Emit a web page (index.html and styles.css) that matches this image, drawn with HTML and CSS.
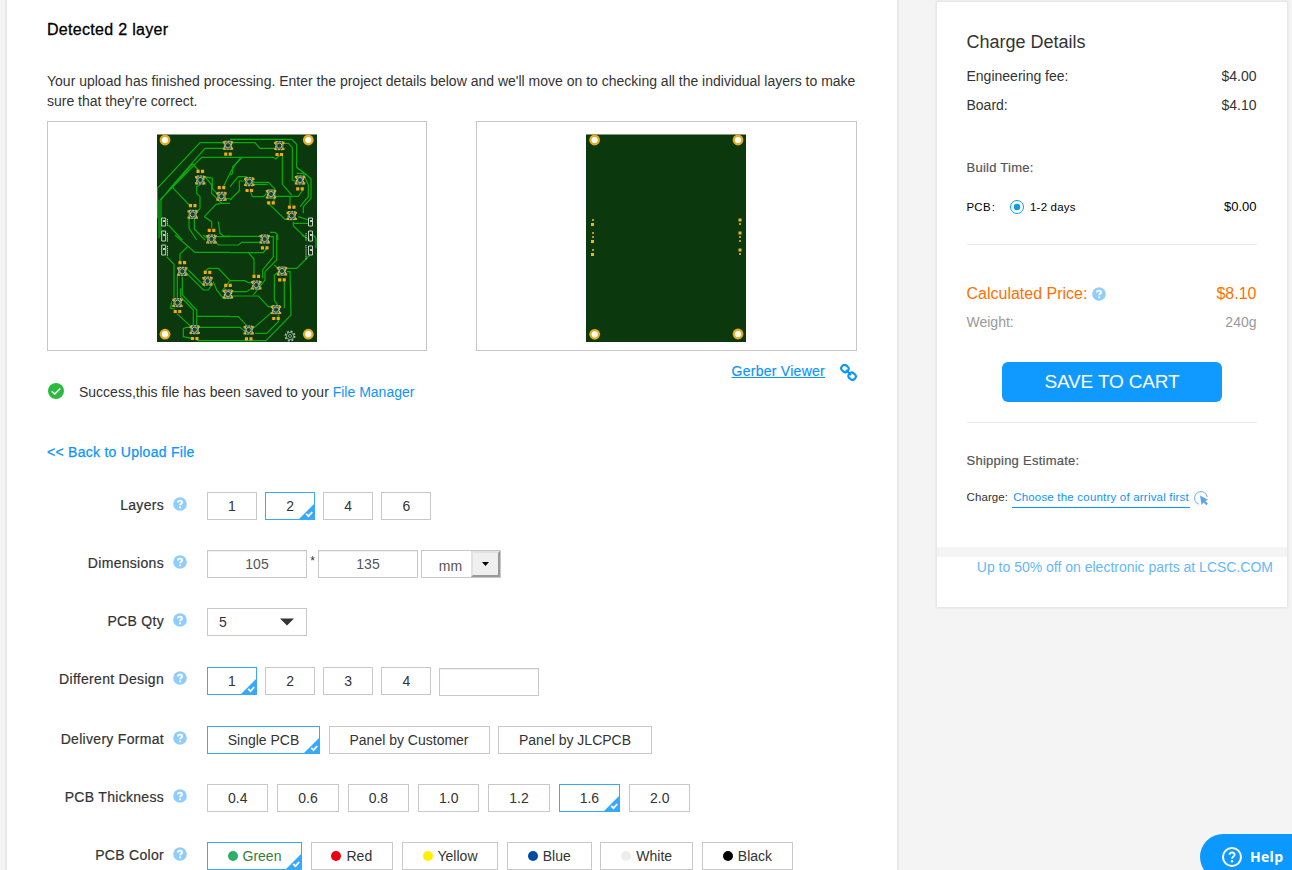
FILE: index.html
```html
<!DOCTYPE html>
<html lang="en">
<head>
<meta charset="utf-8">
<title>PCB Order</title>
<link rel="stylesheet" href="styles.css">
</head>
<body>
<svg class="defs" aria-hidden="true">
  <defs>
    <symbol id="help" viewBox="0 0 14 14"><circle cx="7" cy="7" r="6.8" fill="#90cdff"/><path d="M4.9 5.4C4.9 3 9.1 3 9.1 5.3C9.1 6.8 7.2 6.7 7.1 8.2M7.1 9.5V11.3" fill="none" stroke="#fff" stroke-width="1.9"/></symbol>
    <symbol id="corner" viewBox="0 0 17 17"><path d="M17 0V17H0z" fill="#36a9fc"/><path d="M8.2 10.9L10.5 13.2L14.2 9" fill="none" stroke="#fff" stroke-width="1.8"/></symbol>
    <g id="hole"><circle r="5.4" fill="#e9ac1c"/><circle r="3.1" fill="#fff"/></g>
    <g id="chip"><rect x="-3.6" y="-4" width="7.2" height="8" fill="#31542f" stroke="#b4c6b1" stroke-width="1" stroke-dasharray="2.4 .6"/><circle r="2.6" fill="#1d431c" stroke="#b4c6b1" stroke-width=".9"/><path d="M-5.2-4h2.5v2.2h-2.500zM2.700-4h2.500v2.200H2.700zM-5.200 2.200h2.500v2.200h-2.500zM2.700 2.200h2.500v2.200H2.700z" fill="#d6ab2c"/></g>
    <path id="pads" d="M-3.8-1.6h3.1v3.2h-3.1zM.7-1.6h3.1v3.2H.7z" fill="#f0ab13"/>
    <g id="led-down"><use href="#chip"/><use href="#pads" y="8.8"/></g>
    <g id="led-up"><use href="#chip"/><use href="#pads" y="-8.6"/></g>
  </defs>
</svg>

<div class="page">
  <main class="order">
    <h1 class="order-title">Detected 2 layer</h1>
    <p class="intro">Your upload has finished processing. Enter the project details below and we'll move on to checking all the individual layers to make sure that they're correct.</p>

    <div class="previews">
      <div class="preview preview-top">
        <svg class="board" viewBox="157 134 160 208">
          <rect x="157" y="134" width="160" height="208" fill="#0b390d"/>
          <path d="M157 134.5H317" stroke="#7d9a7d"/>
          <g class="traces">
            <path transform="translate(150 125) scale(.33333)" d="M22 280V190L150 53H240M33 225L60 190L165 70H220M30 225L155 97H240M33 330V225M27 340V225M145 135L127 117L70 182V190L118 240M165 155L185 180V205L215 235H240M270 100L245 135L220 185M150 180L140 185V205L150 215V250L140 262M163 275L198 238L215 235M163 275L185 290V310M117 280V310L140 345M133 280V312L165 345M205 290L210 325L220 333H240M55 300L97 345M163 155L187 160V190L205 210M225 220L245 222"/>
            <path transform="translate(230 125) scale(.33333)" d="M0 43H185L200 58V127L230 150L243 162V220L220 245V265M0 53H75L90 70H135M160 55H175L187 68V165L200 170M0 97H130L137 102L150 90M157 90V178L185 210M0 150L8 145V125L37 97M0 185L25 155H50M28 195V168H50M70 172H115L135 192V215L130 232M70 178H113M135 214H205L218 195M180 240V212M60 195L67 215H100L110 205M110 230L165 283H180M190 290V303L230 340M190 295H235M200 145H220L235 180V215L210 245M205 275L235 285M0 225L30 195M0 334H95M120 322H135L143 330V345"/>
            <path transform="translate(150 235) scale(.33333)" d="M90 80V57L113 35M75 0L135 52H240M160 0L175 12M195 20L205 30H240M200 5H240M50 65L72 88V190M82 120V190M97 125V180L140 225V270M92 160V185L130 225V270M105 110L160 165H175L185 150M163 110L175 100H205L240 137L215 170M190 140L200 165L220 190H240M65 200L62 220L75 222M80 235L120 272M140 244H240M150 277H240M125 310L100 305V280L110 277H120M115 105L165 155M140 317H240"/>
            <path transform="translate(230 235) scale(.33333)" d="M0 30H25L35 22H90M55 53L72 72V120M0 53H100L110 40M120 5H130V65L98 105V130M140 0V75L105 110V135L70 180M133 90L150 105M170 100H200L240 60M170 110H180L183 240L108 317H0M163 140V220M145 215L133 195V120L145 112M0 183H85L115 215H130M0 137H45L55 143H70M0 170H50L65 160M0 245H25L50 272M70 280L125 232M75 295H110L145 260V240M0 277H30L45 290M215 0L240 15M250 0L258 10V40"/>
          </g>
          <g class="connectors">
            <path d="M161.700 218h4v8h-4zM161.700 231h4v10h-4zM161.700 245h4v10h-4zM308.500 218h4v8h-4zM308.500 231h4v10h-4zM308.500 246h4v9h-4z"/>
            <path d="M167.500 219v7M167.500 233v9M167.500 246v10M306 233v8M306 245v15" stroke-dasharray="1.300 .8"/>
            <path d="M163 221h2M163 235h2M163 249h2M310 221h2M310 235h2M310 250h2" stroke="#fff" stroke-width="1.500"/>
          </g>
          <use href="#led-down" x="228" y="145.300"/><use href="#led-down" x="279.300" y="145.700"/>
          <use href="#led-up" x="200.300" y="180"/><use href="#led-up" x="221.500" y="196.300"/>
          <use href="#led-up" x="192.700" y="214.300"/><use href="#led-up" x="211.500" y="239"/>
          <use href="#led-down" x="249.300" y="181.700"/><use href="#led-down" x="271" y="194"/>
          <use href="#led-down" x="300" y="180"/><use href="#led-up" x="291.700" y="215.700"/>
          <use href="#led-down" x="264.700" y="239"/><use href="#led-up" x="182.300" y="271.300"/>
          <use href="#led-up" x="207.500" y="281"/><use href="#led-up" x="228" y="294"/>
          <use href="#led-down" x="177.500" y="302.700"/><use href="#led-down" x="194.700" y="329.700"/>
          <use href="#led-up" x="256.300" y="285"/><use href="#led-down" x="282" y="271"/>
          <use href="#led-down" x="276" y="309.700"/><use href="#led-down" x="248.700" y="330"/>
          <use href="#hole" x="165" y="140"/><use href="#hole" x="308.300" y="140"/>
          <use href="#hole" x="165" y="334.200"/><use href="#hole" x="308.300" y="334.200"/>
          <g fill="none" stroke="#a4b8a4"><circle cx="290" cy="336" r="4.700" stroke-width="1.500" stroke-dasharray="2 1.690"/><circle cx="290" cy="336" r="3.600" stroke-width=".8"/><circle cx="290" cy="336" r="1.500" stroke-width=".8"/></g>
        </svg>
      </div>
      <div class="preview preview-bottom">
        <svg class="board" viewBox="586 134 160 208">
          <rect x="586" y="134" width="160" height="208" fill="#0b390d"/>
          <path d="M586 134.500H746" stroke="#7d9a7d"/>
          <use href="#hole" x="594.600" y="140"/><use href="#hole" x="738" y="140"/>
          <use href="#hole" x="594.700" y="334.300"/><use href="#hole" x="738" y="334"/>
          <path fill="#edb421" d="M591 223h3v3h-3zM591 240h3v3h-3zM591 253h3v3h-3zM738.500 218.500h3v3h-3zM738.500 231.500h3v3h-3zM738.500 248.500h3v3h-3z"/>
          <path fill="#b9972a" d="M592 219h2v2h-2zM592 232h2v2h-2zM592 236h2v2h-2zM592 249h2v2h-2zM739 223h2v2h-2zM739 236h2v2h-2zM739 240h2v2h-2zM739 253h2v2h-2z"/>
        </svg>
      </div>
    </div>

    <div class="viewer">
      <a class="viewer-link">Gerber Viewer</a>
      <svg class="chain" viewBox="0 0 17 17"><g fill="none" stroke="#0c95fb" stroke-width="2.100"><rect x="1.200" y="1.300" width="7.400" height="6.400" rx="3" transform="rotate(42 4.900 4.500)"/><rect x="8.400" y="9" width="7.400" height="6.400" rx="3" transform="rotate(42 12.100 12.200)"/><path d="M6 6L11 11"/></g></svg>
    </div>
    <div class="success">
      <svg class="tick" viewBox="0 0 16 16"><circle cx="8" cy="8" r="8" fill="#2cbb40"/><path d="M3.800 8.300L6.800 11L12.300 5.500" fill="none" stroke="#fff" stroke-width="1.500"/></svg>
      <span>Success,this file has been saved to your <a>File Manager</a></span>
    </div>
    <a class="back">&lt;&lt; Back to Upload File</a>

    <div class="form">
      <div class="field"><span class="label">Layers</span><svg class="help"><use href="#help"/></svg>
        <div class="options digits"><span class="opt">1</span><span class="opt on">2<svg class="corner"><use href="#corner"/></svg></span><span class="opt">4</span><span class="opt">6</span></div></div>
      <div class="field"><span class="label">Dimensions</span><svg class="help"><use href="#help"/></svg>
        <div class="options dims"><span class="box">105</span><span class="times">*</span><span class="box">135</span>
          <span class="unit"><span class="unit-value">mm</span><span class="unit-button"><svg width="7" height="4"><path d="M0 0H7L3.500 4z"/></svg></span></span></div></div>
      <div class="field field-qty"><span class="label">PCB Qty</span><svg class="help"><use href="#help"/></svg>
        <div class="options"><span class="box select">5<svg width="14" height="8"><path d="M0 .5H14L7 7.500z" fill="#333"/></svg></span></div></div>
      <div class="field field-design"><span class="label">Different Design</span><svg class="help"><use href="#help"/></svg>
        <div class="options digits"><span class="opt on">1<svg class="corner"><use href="#corner"/></svg></span><span class="opt">2</span><span class="opt">3</span><span class="opt">4</span><span class="box custom"></span></div></div>
      <div class="field"><span class="label">Delivery Format</span><svg class="help"><use href="#help"/></svg>
        <div class="options formats"><span class="opt on w113">Single PCB<svg class="corner"><use href="#corner"/></svg></span><span class="opt w161">Panel by Customer</span><span class="opt w154">Panel by JLCPCB</span></div></div>
      <div class="field"><span class="label">PCB Thickness</span><svg class="help"><use href="#help"/></svg>
        <div class="options thickness"><span class="opt">0.4</span><span class="opt">0.6</span><span class="opt">0.8</span><span class="opt">1.0</span><span class="opt">1.2</span><span class="opt on">1.6<svg class="corner"><use href="#corner"/></svg></span><span class="opt">2.0</span></div></div>
      <div class="field"><span class="label">PCB Color</span><svg class="help"><use href="#help"/></svg>
        <div class="options colors"><span class="opt on green w95"><i class="dot"></i>Green<svg class="corner"><use href="#corner"/></svg></span><span class="opt red w82"><i class="dot"></i>Red</span><span class="opt yellow w97"><i class="dot"></i>Yellow</span><span class="opt blue w85"><i class="dot"></i>Blue</span><span class="opt white w93"><i class="dot"></i>White</span><span class="opt black w91"><i class="dot"></i>Black</span></div></div>
    </div>
  </main>

  <aside class="summary">
    <div class="charges">
      <h2 class="charges-title">Charge Details</h2>
      <div class="line"><span>Engineering fee:</span><span>$4.00</span></div>
      <div class="line"><span>Board:</span><span>$4.10</span></div>
      <h3 class="sub build">Build Time:</h3>
      <div class="line build-line"><span class="pcb">PCB<span class="colon">:</span></span><svg class="radio" viewBox="0 0 14 14"><circle cx="7" cy="7" r="6.500" fill="#fff" stroke="#0b9cec"/><circle cx="7" cy="7" r="3.200" fill="#0b9cec"/></svg><span class="days">1-2 days</span><span class="build-price">$0.00</span></div>
      <div class="line price"><span class="price-label">Calculated Price:<svg class="help"><use href="#help"/></svg></span><span>$8.10</span></div>
      <div class="line weight"><span>Weight:</span><span>240g</span></div>
      <a class="save">SAVE TO CART</a>
      <h3 class="sub shipping">Shipping Estimate:</h3>
      <div class="country"><span>Charge:</span><a class="country-link">Choose the country of arrival first</a><svg class="pointer" viewBox="0 0 15 15"><path d="M5 13.200A6.400 6.400 0 1 1 13.300 6" fill="none" stroke="#8abcf0" stroke-width="1.200"/><path d="M6 4.500L14 8.700L11.200 10L13.900 12.700L12.300 14.300L9.600 11.600L7.500 14z" fill="#5ba6e9"/></svg></div>
    </div>
    <div class="promo">Up to 50% off on electronic parts at LCSC.COM</div>
  </aside>
</div>

<div class="help-widget"><svg viewBox="0 0 20 20" class="help-widget-icon"><circle cx="10" cy="10" r="9" fill="none" stroke="#fff" stroke-width="2"/><path d="M7.500 7.800C7.500 4.700 12.700 4.800 12.600 7.800C12.500 9.600 10 9.400 10 11.700" fill="none" stroke="#fff" stroke-width="1.900"/><circle cx="10" cy="14.300" r="1.200" fill="#fff"/></svg><span>Help</span></div>
</body>
</html>
```
FILE: styles.css
```css
* { box-sizing: border-box; }
body { margin: 0; height: 870px; overflow: hidden; background: #f4f4f4; color: #333; font: 14px/20px "Liberation Sans", Arial, sans-serif; }
h1, h2, h3, p { margin: 0; font-weight: normal; }
a { color: #0c95fb; }
svg { display: block; flex: none; }
.defs { position: absolute; width: 0; height: 0; }
.page { display: flex; align-items: flex-start; height: 870px; padding-left: 7px; overflow: hidden; }

.order { width: 890px; height: 880px; padding: 19px 40px 0; background: #fff; box-shadow: 0 0 2px 1px #ddd; }
.order-title { margin-bottom: 32px; padding-top: 1px; height: 20px; color: #000; font-size: 16px; letter-spacing: .3px; -webkit-text-stroke: .3px #000; }
.intro { width: 815px; }
.previews { display: flex; justify-content: space-between; margin-top: 10px; }
.preview { display: flex; justify-content: center; width: 380px; height: 230px; padding-top: 12px; border: 1px solid #c6c6c6; }
.preview-bottom { width: 381px; padding-right: 1px; }
.board { width: 160px; height: 208px; }
.traces { fill: none; stroke: #08ac0c; stroke-width: 3.6; }
.connectors { fill: none; stroke: #c4d3c1; stroke-width: 1; }
.viewer { display: flex; justify-content: flex-end; align-items: center; gap: 15px; margin-top: 10px; height: 20px; }
.viewer-link { text-decoration: underline; letter-spacing: .27px; -webkit-text-stroke: .2px #0c95fb; }
.chain { width: 17px; height: 17px; margin-top: 3px; }
.success { display: flex; align-items: center; gap: 15px; height: 20px; margin-top: 1px; padding-left: 1px; }
.tick { width: 16px; height: 16px; margin-top: -2px; }
.back { display: block; margin-top: 40px; letter-spacing: .27px; -webkit-text-stroke: .25px #0c95fb; }

.form { display: flex; flex-direction: column; gap: 30px; margin-top: 30px; }
.field { display: flex; height: 28px; }
.field-design { margin: 1px 0; }
.label { width: 117px; padding-top: 3px; text-align: right; white-space: nowrap; letter-spacing: .3px; -webkit-text-stroke: .2px #333; }
.field > .help { margin: 5px 20px 0 9px; }
.field-design > .label { padding-top: 2px; }
.field-design > .help { margin-top: 4px; }
.help { width: 14px; height: 14px; }
.options { display: flex; }
.opt, .box { position: relative; display: flex; justify-content: center; align-items: center; height: 28px; border: 1px solid #c8c8c8; white-space: nowrap; }
.digits { gap: 8.400px; }
.digits .opt { width: 49.780px; }
.opt.on { border-color: #36a9fc; }
.corner { position: absolute; right: -1px; bottom: -1px; width: 17px; height: 17px; }
.box { width: 100px; box-shadow: inset 0 1px 1px #eee; color: #555; }
.times { width: 11px; line-height: 23px; text-align: center; font-size: 12px; }
.unit { display: flex; width: 80px; height: 28px; margin-left: 3px; border: 1px solid #c8c8c8; color: #555; }
.unit-value { width: 49px; padding: 5px 0 0 8px; text-align: center; }
.unit-button { display: flex; justify-content: center; align-items: center; width: 29px; height: 26px; background: #efefef; border: 2px solid; border-color: #e2e2e2 #999 #999 #e2e2e2; color: #000; }
.select { justify-content: space-between; padding: 0 12px 0 11px; box-shadow: none; color: #333; }
.custom { margin: 1px 0 -1px; }
.digits .custom { margin-left: -.700px; }
.formats { gap: 8.500px; }
.thickness { gap: 8.900px; }
.thickness .opt { width: 61.450px; }
.colors { gap: 8.700px; }
.w82 { width: 82.300px; }
.w85 { width: 84.500px; }
.w91 { width: 91px; }
.w93 { width: 93px; }
.w95 { width: 95px; }
.w97 { width: 96.700px; }
.w113 { width: 113px; }
.w154 { width: 154px; }
.w161 { width: 161px; }
.dot { width: 10px; height: 10px; margin-right: 5px; border-radius: 50%; background: #000; }
.green { color: #377d3a; }
.green .dot { background: #2fae69; }
.red .dot { background: #e60012; }
.yellow .dot { background: #ffef00; }
.blue .dot { background: #004a9f; }
.white .dot { background: #ededed; }

.summary { width: 350px; height: 605px; margin: 2px 0 0 40px; background: #fff; box-shadow: 0 0 2px 1px #e0e0e0; }
.charges { height: 545px; padding: 28px 30.500px 0 29.500px; }
.charges-title { height: 24px; margin-bottom: 12px; font-size: 18px; line-height: 24px; }
.line { display: flex; justify-content: space-between; height: 20px; margin-bottom: 9px; }
.sub { color: #555; font-size: 13px; letter-spacing: .25px; -webkit-text-stroke: .2px #555; }
.build { margin-top: 43px; }
.build-line { justify-content: flex-start; align-items: center; height: 67px; margin: 0; padding-bottom: 8px; border-bottom: 1px solid #e8e8e8; color: #000; font-size: 11.500px; }
.pcb { width: 43.500px; letter-spacing: .2px; }
.colon { margin-left: 1px; }
.radio { width: 14px; height: 14px; }
.days { margin-left: 6px; letter-spacing: .2px; }
.build-price { margin-left: auto; font-size: 13px; }
.price { margin: 39px 0 8px; color: #ff6f00; font-size: 16px; }
.price-label { display: flex; align-items: center; gap: 5px; }
.weight { color: #999; }
.save { display: block; width: 220px; height: 40px; margin: 30px 0 0 35.500px; border-radius: 6px; background: #109aff; color: #fff; font-size: 19px; line-height: 39px; text-align: center; letter-spacing: -.15px; }
.shipping { margin-top: 20px; padding-top: 28px; border-top: 1px solid #e8e8e8; }
.country { display: flex; margin-top: 18px; font-size: 11.500px; line-height: 17px; letter-spacing: .2px; }
.country > span { letter-spacing: .1px; }
.country-link { height: 19px; margin: 0 4px; padding: 0 1px; border-bottom: 1px solid #0c95fb; }
.pointer { width: 15px; height: 15px; margin-top: 2px; }
.promo { height: 60px; padding-right: 14px; border-top: 10px solid #f4f4f4; color: #66b7fb; text-align: right; line-height: 20px; white-space: nowrap; }

.help-widget { position: fixed; left: 1200px; top: 834px; display: flex; align-items: center; gap: 8px; width: 120px; height: 46px; padding-left: 22px; border-radius: 23px; background: #0b98ff; color: #fff; font: bold 14px/20px "Open Sans", sans-serif; letter-spacing: .3px; }
.help-widget-icon { width: 20px; height: 20px; }
```
